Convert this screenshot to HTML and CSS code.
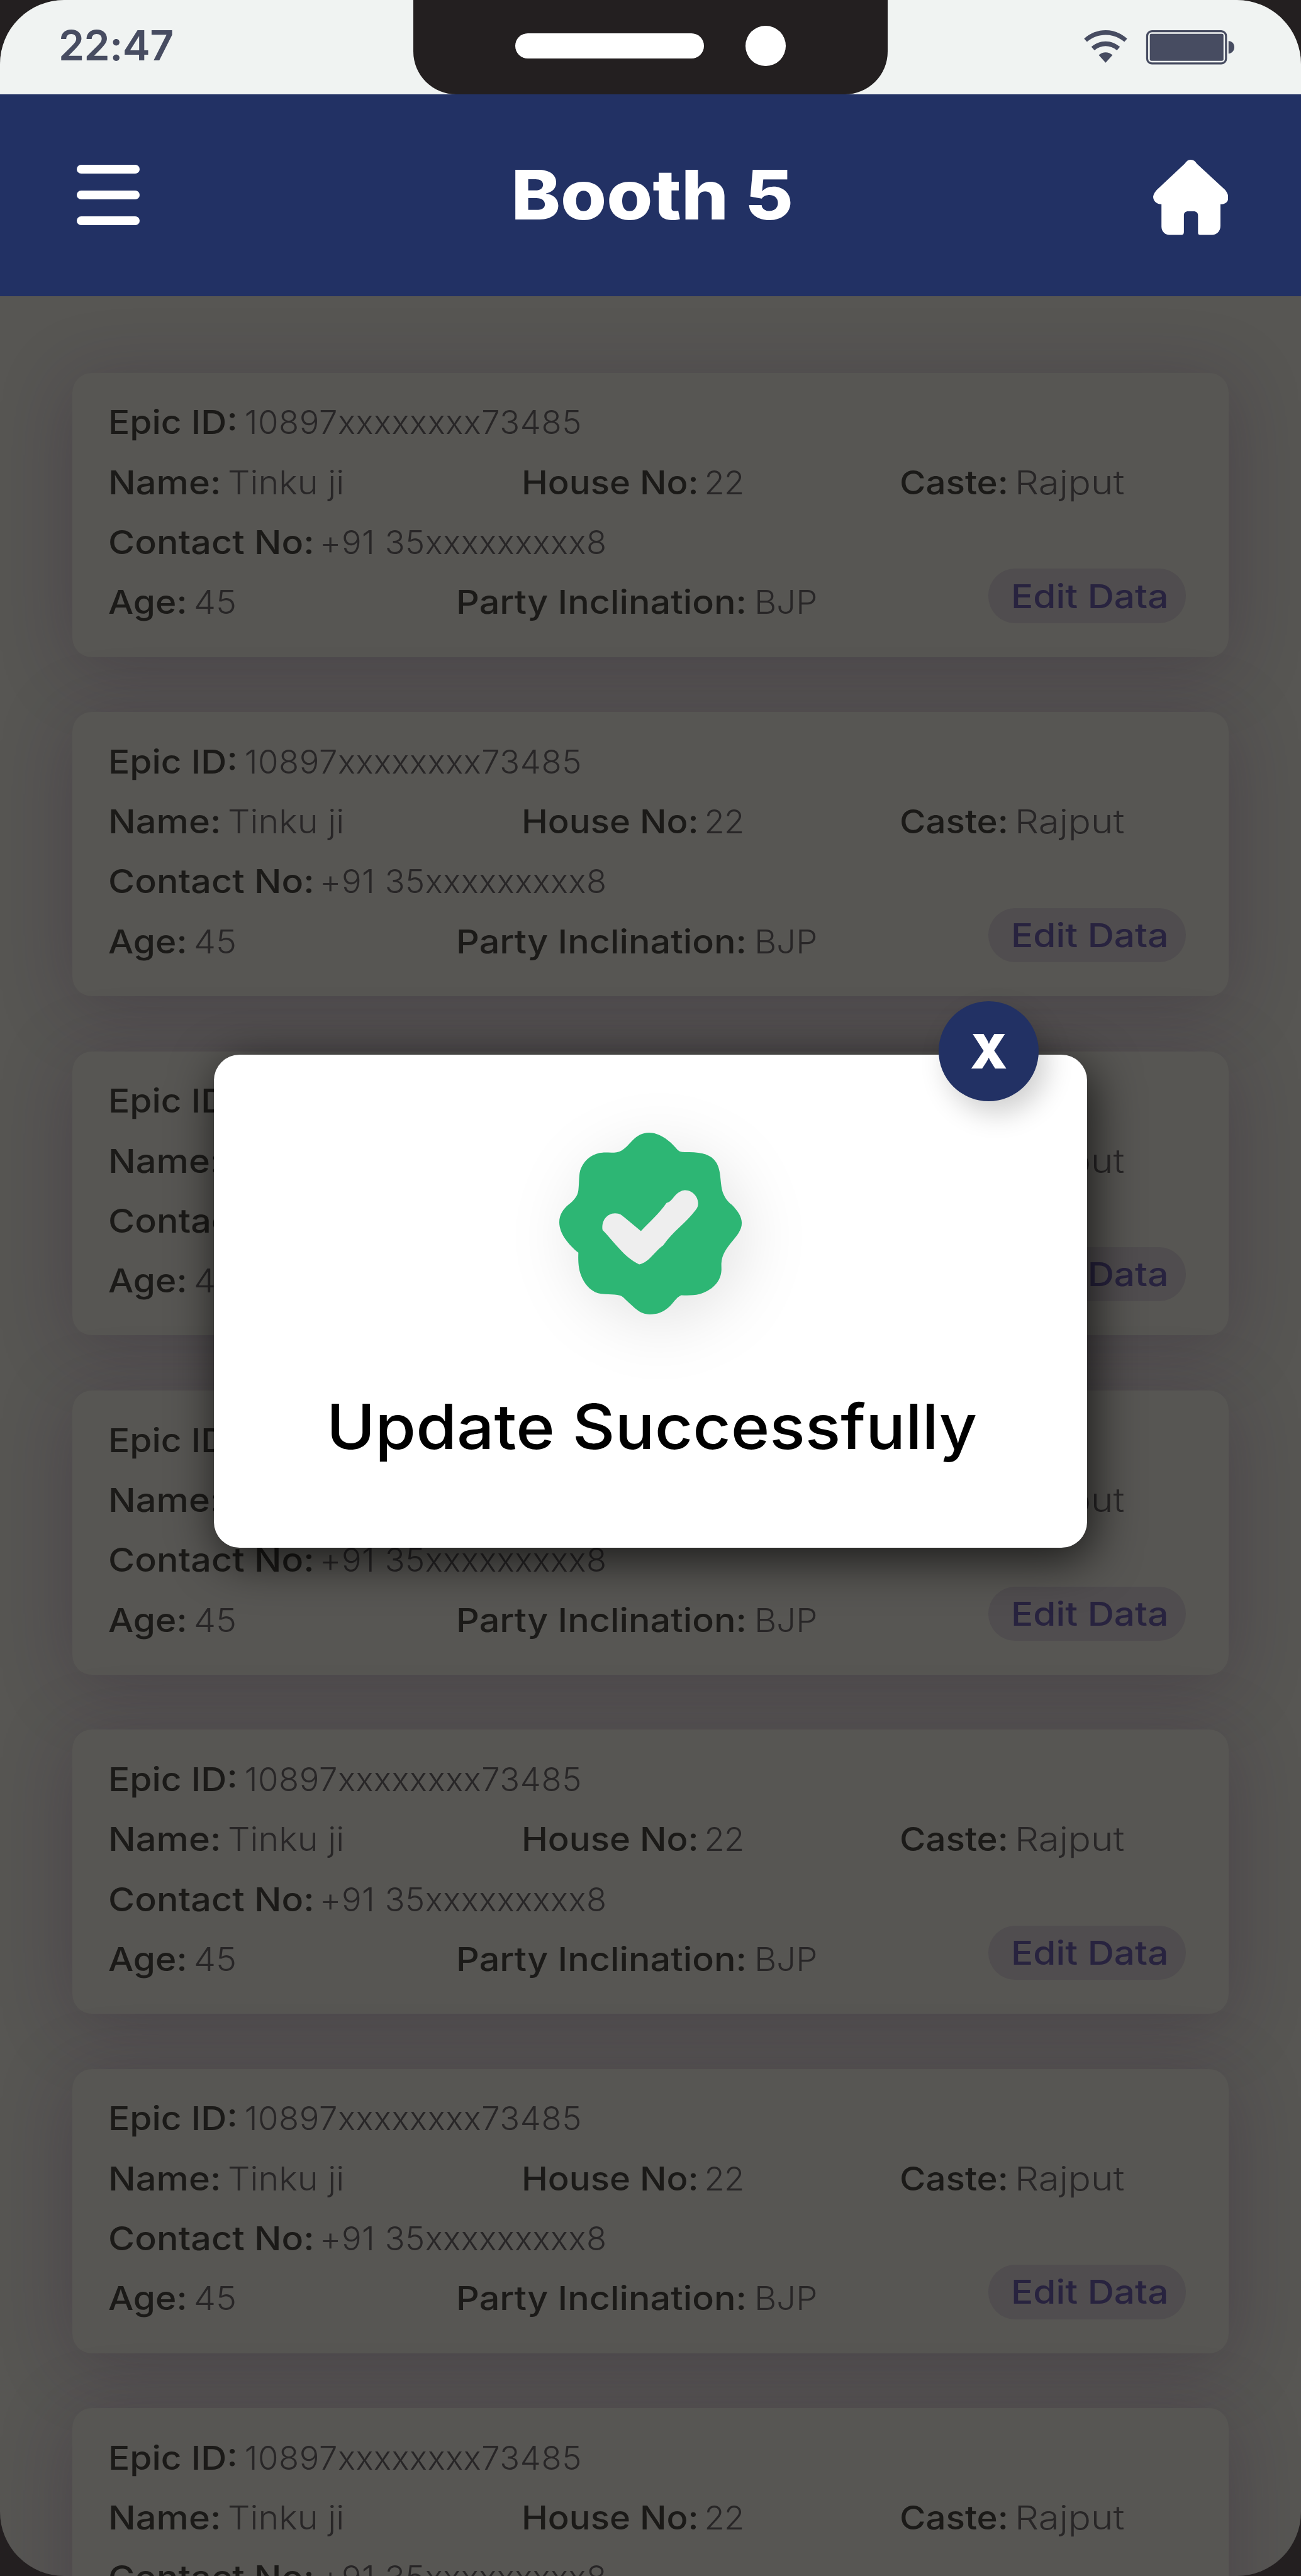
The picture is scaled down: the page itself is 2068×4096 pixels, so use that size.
FILE: index.html
```html
<!DOCTYPE html>
<html lang="en">
<head>
<meta charset="utf-8">
<title>Booth 5</title>
<link rel="stylesheet" href="styles.css">
</head>
<body>
<div class="phone">
  <header class="status">
    <span class="time">22:47</span>
    <div class="notch"><i class="speaker"></i><i class="camera"></i></div>
    <svg class="signals" viewBox="60 90 1041 237" preserveAspectRatio="none">
      <g fill="#474c61">
        <path d="M61 149C147 71 273 71 359 149L340 171C265 107 155 107 81 171Z"/>
        <path d="M111 206C169 154 251 154 309 206L288 229C242 191 178 191 133 229Z"/>
        <path d="M162 262C192 237 228 237 258 262L210 315Z"/>
        <rect x="516" y="115" width="510" height="187" rx="10"/>
        <path d="M1061 165C1085 165 1101 184 1101 208C1101 232 1085 252 1061 252Z"/>
      </g>
      <rect x="497.500" y="97" width="546" height="223" rx="33" fill="none" stroke="#474c61" stroke-width="14"/>
    </svg>
  </header>
  <nav class="appbar">
    <div class="burger"><i></i><i></i><i></i></div>
    <h1 class="title">Booth 5</h1>
    <svg class="home" viewBox="1211 804 181 378" preserveAspectRatio="none">
      <path fill="#fff" d="M1301 804C1308 804 1312 811 1316 824L1384 955C1390 970 1392 985 1392 993C1392 1015 1385 1028 1373 1028L1373 1137C1373 1165 1363 1182 1353 1182L1325 1182C1320 1182 1319 1177 1319 1170L1319 1085C1319 1070 1315 1063 1308 1063L1296 1063C1288 1063 1285 1070 1285 1085L1285 1165C1285 1178 1283 1182 1278 1182L1250 1182C1240 1182 1231 1165 1231 1140L1231 1028C1218 1028 1211 1010 1211 990C1212 975 1215 968 1220 955L1287 824C1292 811 1295 804 1301 804Z"/>
    </svg>
  </nav>
  <main class="list" id="list">
    <article class="card">
      <div class="row"><p class="epic"><b>Epic ID:</b><span>10897xxxxxxxx73485</span></p></div>
      <div class="row person">
        <p class="name"><b>Name:</b><span>Tinku ji</span></p>
        <p class="house"><b>House No:</b><span>22</span></p>
        <p class="caste"><b>Caste:</b><span>Rajput</span></p>
      </div>
      <div class="row"><p class="contact"><b>Contact No:</b><span>+91 35xxxxxxxxx8</span></p></div>
      <div class="row party-row">
        <p class="age"><b>Age:</b><span>45</span></p>
        <p class="party"><b>Party Inclination:</b><span>BJP</span></p>
        <button class="edit"><em>Edit Data</em></button>
      </div>
    </article>
  </main>
  <section class="modal">
    <button class="close">X</button>
    <svg class="badge" viewBox="60 69 1263 1258">
      <path fill="#2db674" d="M682 69C745 69 822 116 878 188C898 207 920 204 960 204C1050 205 1110 221 1145 273C1186 337 1168 425 1197 496C1213 533 1235 554 1255 569C1297 613 1323 652 1323 695C1323 745 1288 784 1248 832C1203 887 1178 932 1182 1000C1189 1105 1110 1163 1030 1187C990 1196 945 1196 904 1194C866 1210 846 1255 810 1284C770 1316 735 1327 687 1327C650 1327 620 1314 597 1295C555 1260 525 1229 501 1207C475 1186 425 1191 350 1185C290 1178 242 1128 219 1077C191 1018 190 960 192 899C125 846 60 767 60 689C60 635 90 594 125 566C160 539 188 508 192 468C199 410 194 350 210 316C239 247 302 210 360 207C400 204 450 216 491 193C555 156 582 69 682 69Z"/>
      <path fill="#eee" d="M360 744C349 680 389 627 446 627C480 627 496 642 511 656L625 750C682 688 751 631 802 555C835 551 852 507 880 487C904 470 918 467 932 467C980 468 1021 510 1021 558C1021 578 1015 591 1003 606C930 700 850 750 779 849C721 887 685 965 613 981C506 930 436 820 360 744Z"/>
    </svg>
    <p class="message">Update Successfully</p>
  </section>
</div>
<script>
const list = document.getElementById('list');
const card = list.firstElementChild;
for (let i = 0; i < 6; i++) list.appendChild(card.cloneNode(true));
</script>
</body>
</html>
```
FILE: styles.css
```css
* { box-sizing: border-box; margin: 0; padding: 0; }
html, body { width: 2068px; height: 4096px; overflow: hidden; background: #231f20; }
body { font-family: Inter, "Open Sans", sans-serif; }
button { border: 0; font-family: inherit; }
i { display: block; }

.phone {
  position: relative;
  width: 2068px;
  height: 4096px;
  border-radius: 102px;
  overflow: hidden;
  background: #575653;
}

.status {
  position: relative;
  z-index: 1;
  display: flex;
  justify-content: space-between;
  height: 149.5px;
  padding: 0 106px 0 93px;
  background: #f0f3f2;
}
.time { font-size: 66px; font-weight: 600; line-height: 144px; letter-spacing: -.5px; color: #474c61; }
.signals { width: 239px; height: 54.4px; margin-top: 48.2px; }
.notch {
  position: absolute;
  left: 656.6px;
  top: 0;
  width: 754.4px;
  height: 149.5px;
  display: flex;
  align-items: center;
  gap: 66.7px;
  padding: 0 0 3px 162.4px;
  border-radius: 0 0 68px 68px;
  background: #231f20;
}
.speaker { width: 299.7px; height: 39.6px; border-radius: 20px; background: #fff; }
.camera { width: 63.6px; height: 63.6px; border-radius: 50%; background: #fff; }

.appbar {
  position: relative;
  z-index: 1;
  display: grid;
  grid-template-columns: 1fr auto 1fr;
  align-items: center;
  height: 321px;
  padding: 0 116px 0 122px;
  background: #223164;
}
.burger { display: grid; gap: 26.6px; width: 99.6px; }
.burger i { height: 14.3px; border-radius: 7px; background: #fff; }
.title { padding-bottom: 3px; font-size: 109px; font-weight: 800; line-height: 120px; color: #fff; transform: scaleX(1.085); }
.home { justify-self: end; width: 119.5px; height: 119.5px; margin-top: 8px; }

.list { display: grid; gap: 87.5px; padding: 122.3px 115.4px 0 115px; }
.card {
  height: 451.9px;
  padding: 31.7px 67.9px 0 57px;
  border-radius: 31px;
  background: #575653;
  box-shadow: 0 17px 115px rgba(40, 22, 50, .28);
  font-size: 52.6px;
  line-height: 95.3px;
  color: #282627;
}
.row { display: flex; height: 95.3px; white-space: nowrap; }
.row p { display: flex; }
.row b { font-weight: 500; color: #1b1a18; transform-origin: left; }
.row span { font-weight: 300; transform-origin: left; }
.person { display: grid; grid-template-columns: 656.5px 601.5px 1fr; }
.party-row { display: grid; grid-template-columns: 553.1px 1fr auto; }

/* labels are set slightly extended, each to its own measure */
.epic b { transform: scaleX(1.082); }
.epic span { letter-spacing: .6px; margin-left: 26.6px; }
.name b { transform: scaleX(1.1); }
.name span { transform: scaleX(1.06); margin-left: 27px; }
.house b { transform: scaleX(1.069); }
.house span { letter-spacing: -.7px; margin-left: 27.6px; }
.caste b { transform: scaleX(1.074); }
.caste span { transform: scaleX(1.143); margin-left: 22px; }
.contact b { transform: scaleX(1.093); }
.contact span { letter-spacing: .55px; margin-left: 36.2px; }
.age b { transform: scaleX(1.08); }
.age span { transform: scaleX(1.06); margin-left: 19.4px; }
.party b { transform: scaleX(1.093); }
.party span { transform: scaleX(1.035); margin-left: 51.2px; }

.edit {
  width: 313.3px;
  height: 86.3px;
  margin-top: -6px;
  padding-left: 35.6px;
  border-radius: 43px;
  background: #504d4f;
  font-size: 52.6px;
  font-weight: 500;
  line-height: 86px;
  text-align: left;
  color: #28233f;
}
.edit em { display: inline-block; font-style: normal; transform: scaleX(1.112); transform-origin: left; }

.modal {
  position: absolute;
  left: 340px;
  top: 1677.2px;
  width: 1387.7px;
  height: 783.8px;
  display: flex;
  flex-direction: column;
  align-items: center;
  padding-top: 123.4px;
  border-radius: 41px;
  background: #fff;
  box-shadow: 8px 18px 76px rgba(0, 0, 0, .72);
}
.badge { width: 290.1px; height: 289px; overflow: visible; filter: drop-shadow(14px 20px 50px rgba(0, 0, 0, .11)); }
.message { margin-top: 119px; padding-left: 3.6px; font-size: 98.4px; font-weight: 500; line-height: 120px; white-space: nowrap; color: #000; transform: scaleX(1.066); }
.close {
  position: absolute;
  right: 76.3px;
  top: -85.200px;
  width: 159.4px;
  height: 159.4px;
  border-radius: 50%;
  background: #223164;
  box-shadow: 13px 19px 44px rgba(0, 0, 0, .19);
  font-size: 75px;
  font-weight: 900;
  line-height: 159px;
  text-align: center;
  color: #fff;
}
```
